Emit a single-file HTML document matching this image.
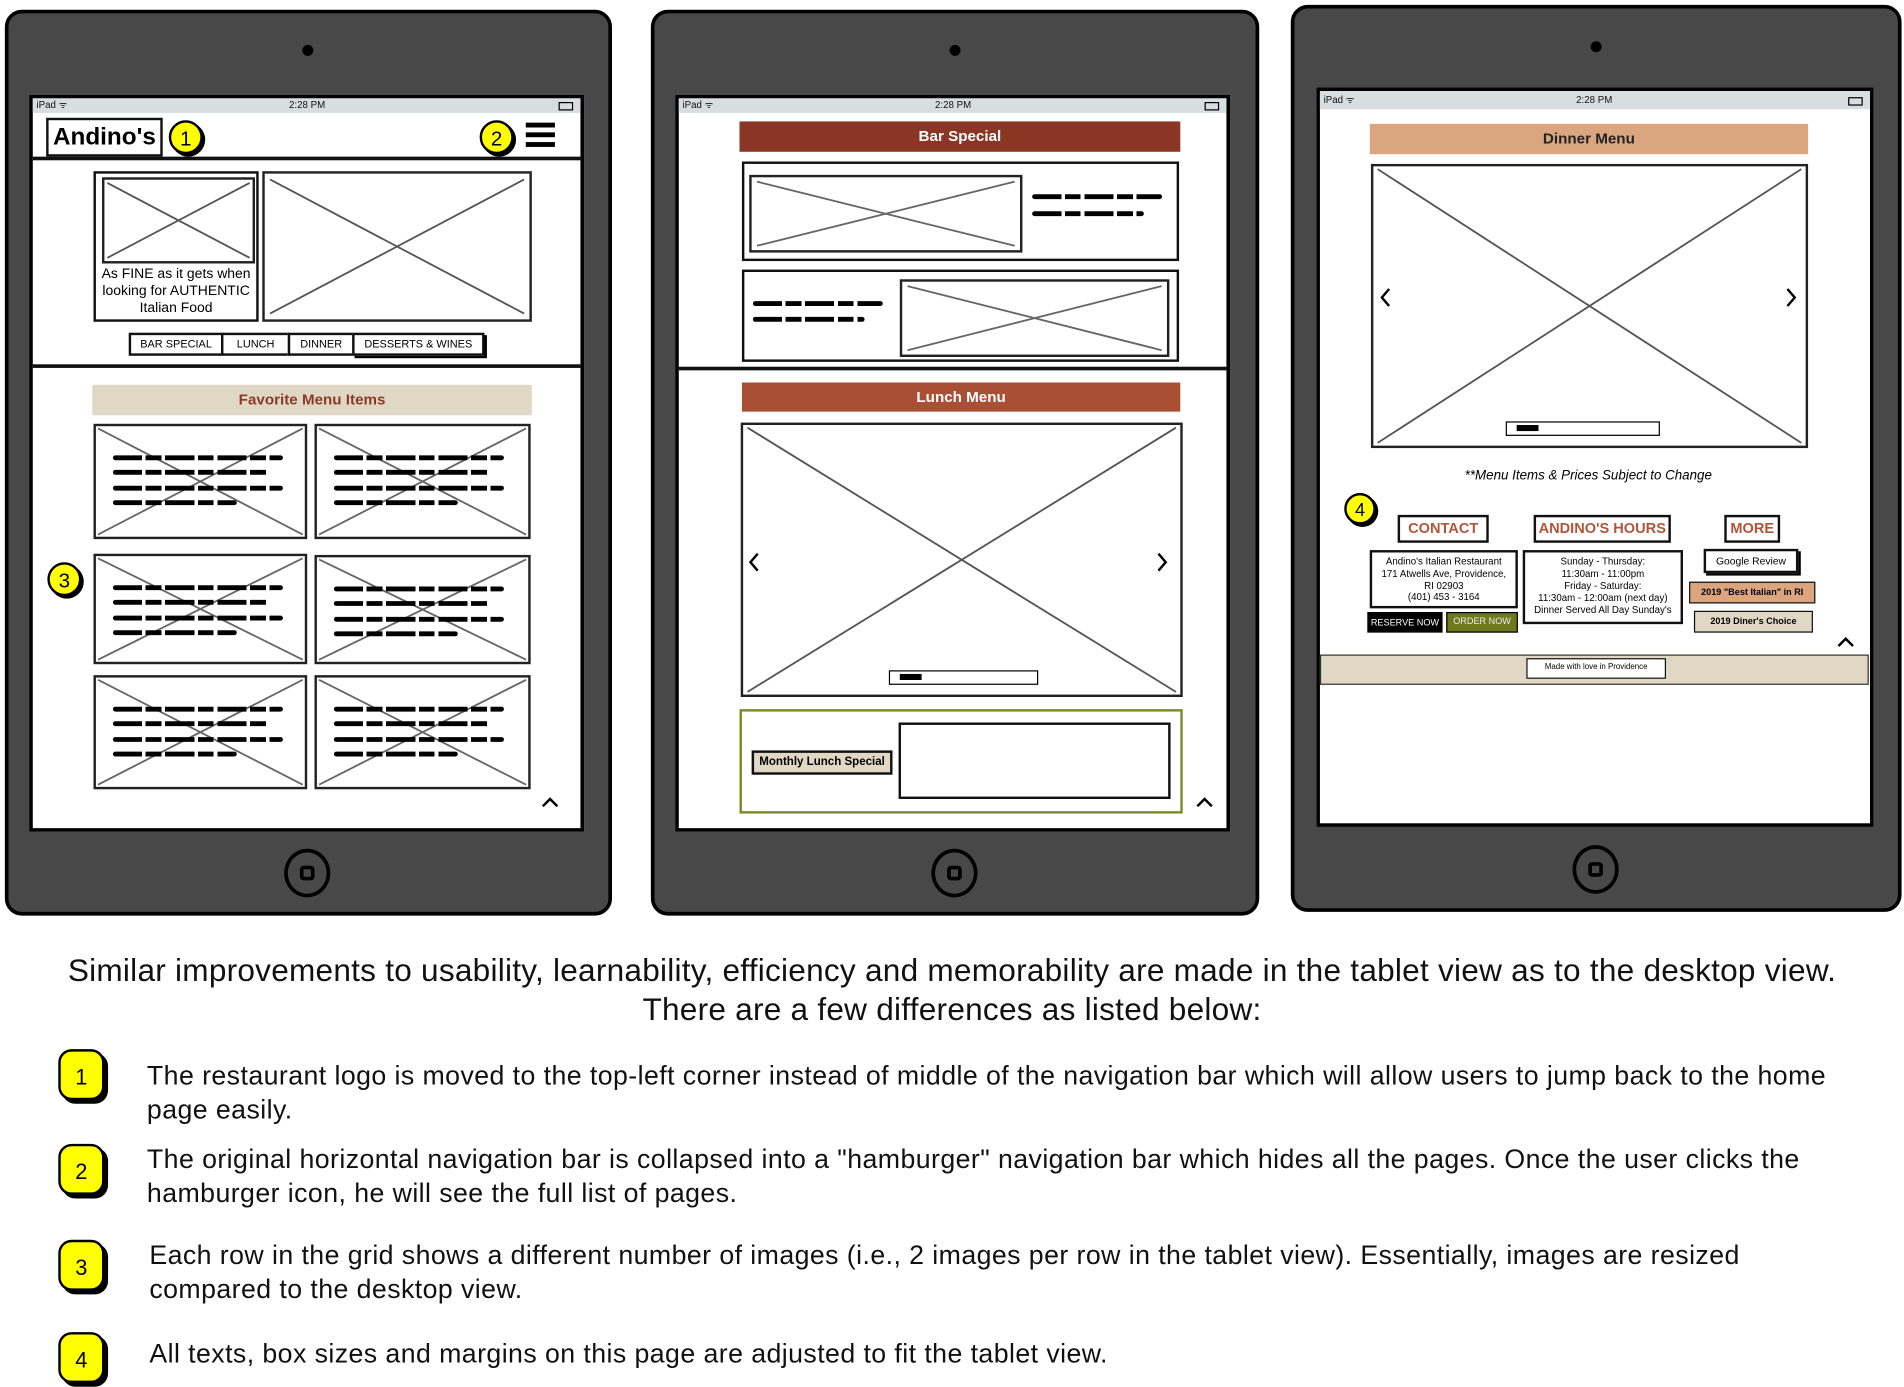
<!DOCTYPE html>
<html><head><meta charset="utf-8"><style>
html,body{margin:0;padding:0;background:#fff;}
body{width:1904px;height:1387px;overflow:hidden;position:relative;font-family:"Liberation Sans",sans-serif;}
#w{position:absolute;left:0;top:0;width:1568px;height:1142px;transform:scale(1.21429);transform-origin:0 0;}
.a{position:absolute;box-sizing:border-box;}
.tab{background:#484848;border:3px solid #000;border-radius:14px;}
.scr{background:#fff;border:3px solid #000;}
.cam{width:9px;height:9px;border-radius:50%;background:#000;}
.home{width:38px;height:40px;border-radius:50%;border:3px solid #000;}
.home:after{content:"";position:absolute;left:10px;top:11px;width:12px;height:12px;border:3px solid #000;border-radius:3px;box-sizing:border-box;}
.sb{background:#d8dde0;font-size:8px;line-height:12px;color:#111;}
.img{border:2px solid #222;background:#fff;}
.img svg{position:absolute;left:0;top:0;width:100%;height:100%;}
.s{position:absolute;height:4px;border-radius:2px;background:repeating-linear-gradient(90deg,#000 0 24px,transparent 24px 27px,#000 27px 40px,transparent 40px 43px);}
.bx{border:2px solid #111;background:#fff;}
.badge{width:28px;height:28px;border-radius:50%;background:#ffff00;border:2px solid #000;box-shadow:2px 2px 0 #000;font-size:17px;text-align:center;line-height:28px;}
.nb{border:2px solid #111;font-size:9px;text-align:center;line-height:15px;background:#fff;}
.lb{width:38px;height:42px;border-radius:11px;background:#ffff00;border:2px solid #000;box-shadow:3px 3px 0 #000;font-size:18px;text-align:center;line-height:42px;}
.t{font-size:22px;line-height:28px;color:#111;letter-spacing:0.35px;}
</style></head><body><div id="w">

<!-- TABLET 1 -->
<div class="a tab" style="left:4px;top:8px;width:500px;height:746px"></div>
<div class="a cam" style="left:249px;top:37px"></div>
<div class="a home" style="left:234px;top:699px"></div>
<div class="a scr" style="left:24px;top:78px;width:457px;height:607px"></div>
<div class="a sb" style="left:27px;top:81px;width:451px;height:12px"><span style="position:absolute;left:3px">iPad ᯤ</span><span style="position:absolute;left:211px">2:28 PM</span><span style="position:absolute;right:6px;top:3px;width:10px;height:5px;border:1px solid #000"></span></div>
<div class="a" style="left:27px;top:129px;width:451px;height:3px;background:#111"></div>
<div class="a" style="left:38px;top:97px;width:96px;height:32px;border:2px solid #111;font-size:20px;font-weight:bold;line-height:28px;text-align:center">Andino's</div>
<div class="a badge" style="left:139px;top:99px">1</div>
<div class="a badge" style="left:395px;top:99px">2</div>
<div class="a" style="left:433px;top:101px;width:24px;height:4px;background:#000"></div>
<div class="a" style="left:433px;top:109px;width:24px;height:4px;background:#000"></div>
<div class="a" style="left:433px;top:117px;width:24px;height:4px;background:#000"></div>
<div class="a bx" style="left:77px;top:141px;width:136px;height:124px"></div>
<div class="a img" style="left:84px;top:146px;width:126px;height:71px"><svg viewBox="0 0 100 100" preserveAspectRatio="none"><path d="M2 4L98 96M2 96L98 4" stroke="#555" stroke-width="1.5" vector-effect="non-scaling-stroke"/></svg></div>
<div class="a" style="left:78px;top:219px;width:134px;font-size:11.5px;line-height:14px;text-align:center">As FINE as it gets when looking for AUTHENTIC Italian Food</div>
<div class="a img" style="left:216px;top:141px;width:222px;height:124px"><svg viewBox="0 0 100 100" preserveAspectRatio="none"><path d="M2 4L98 96M2 96L98 4" stroke="#555" stroke-width="1.5" vector-effect="non-scaling-stroke"/></svg></div>
<div class="a nb" style="left:106px;top:274px;width:78px;height:19px">BAR SPECIAL</div>
<div class="a nb" style="left:182px;top:274px;width:57px;height:19px">LUNCH</div>
<div class="a nb" style="left:237px;top:274px;width:55px;height:19px">DINNER</div>
<div class="a nb" style="left:290px;top:274px;width:109px;height:19px;box-shadow:2px 2px 0 #000">DESSERTS &amp; WINES</div>
<div class="a" style="left:27px;top:300px;width:451px;height:3px;background:#111"></div>
<div class="a" style="left:76px;top:317px;width:362px;height:25px;background:#e0d8c4;color:#8b3a2a;font-weight:bold;font-size:12.5px;text-align:center;line-height:25px">Favorite Menu Items</div>

<div class="a img" style="left:77px;top:349px;width:176px;height:95px"><svg viewBox="0 0 100 100" preserveAspectRatio="none"><path d="M1 2L99 98M1 98L99 2" stroke="#666" stroke-width="1.5" vector-effect="non-scaling-stroke"/></svg><i class="s" style="left:14px;top:24px;width:140px"></i><i class="s" style="left:14px;top:36px;width:128px"></i><i class="s" style="left:14px;top:49px;width:140px"></i><i class="s" style="left:14px;top:61px;width:102px"></i></div>
<div class="a img" style="left:259px;top:349px;width:178px;height:95px"><svg viewBox="0 0 100 100" preserveAspectRatio="none"><path d="M1 2L99 98M1 98L99 2" stroke="#666" stroke-width="1.5" vector-effect="non-scaling-stroke"/></svg><i class="s" style="left:14px;top:24px;width:140px"></i><i class="s" style="left:14px;top:36px;width:128px"></i><i class="s" style="left:14px;top:49px;width:140px"></i><i class="s" style="left:14px;top:61px;width:102px"></i></div>
<div class="a img" style="left:77px;top:456px;width:176px;height:91px"><svg viewBox="0 0 100 100" preserveAspectRatio="none"><path d="M1 2L99 98M1 98L99 2" stroke="#666" stroke-width="1.5" vector-effect="non-scaling-stroke"/></svg><i class="s" style="left:14px;top:24px;width:140px"></i><i class="s" style="left:14px;top:36px;width:128px"></i><i class="s" style="left:14px;top:49px;width:140px"></i><i class="s" style="left:14px;top:61px;width:102px"></i></div>
<div class="a img" style="left:259px;top:457px;width:178px;height:90px"><svg viewBox="0 0 100 100" preserveAspectRatio="none"><path d="M1 2L99 98M1 98L99 2" stroke="#666" stroke-width="1.5" vector-effect="non-scaling-stroke"/></svg><i class="s" style="left:14px;top:24px;width:140px"></i><i class="s" style="left:14px;top:36px;width:128px"></i><i class="s" style="left:14px;top:49px;width:140px"></i><i class="s" style="left:14px;top:61px;width:102px"></i></div>
<div class="a img" style="left:77px;top:556px;width:176px;height:94px"><svg viewBox="0 0 100 100" preserveAspectRatio="none"><path d="M1 2L99 98M1 98L99 2" stroke="#666" stroke-width="1.5" vector-effect="non-scaling-stroke"/></svg><i class="s" style="left:14px;top:24px;width:140px"></i><i class="s" style="left:14px;top:36px;width:128px"></i><i class="s" style="left:14px;top:49px;width:140px"></i><i class="s" style="left:14px;top:61px;width:102px"></i></div>
<div class="a img" style="left:259px;top:556px;width:178px;height:94px"><svg viewBox="0 0 100 100" preserveAspectRatio="none"><path d="M1 2L99 98M1 98L99 2" stroke="#666" stroke-width="1.5" vector-effect="non-scaling-stroke"/></svg><i class="s" style="left:14px;top:24px;width:140px"></i><i class="s" style="left:14px;top:36px;width:128px"></i><i class="s" style="left:14px;top:49px;width:140px"></i><i class="s" style="left:14px;top:61px;width:102px"></i></div>
<div class="a badge" style="left:39px;top:463px">3</div>
<svg class="a" style="left:446px;top:656px" width="14" height="10"><path d="M1 8L7 2L13 8" stroke="#000" stroke-width="2" fill="none"/></svg>

<!-- TABLET 2 -->
<div class="a tab" style="left:536px;top:8px;width:501px;height:746px"></div>
<div class="a cam" style="left:782px;top:37px"></div>
<div class="a home" style="left:767px;top:699px"></div>
<div class="a scr" style="left:556px;top:78px;width:457px;height:607px"></div>
<div class="a sb" style="left:559px;top:81px;width:451px;height:12px"><span style="position:absolute;left:3px">iPad ᯤ</span><span style="position:absolute;left:211px">2:28 PM</span><span style="position:absolute;right:6px;top:3px;width:10px;height:5px;border:1px solid #000"></span></div>
<div class="a" style="left:609px;top:100px;width:363px;height:25px;background:#8b3524;color:#fff;font-weight:bold;font-size:12.5px;text-align:center;line-height:25px">Bar Special</div>
<div class="a bx" style="left:611px;top:133px;width:360px;height:82px"></div>
<div class="a img" style="left:617px;top:144px;width:225px;height:64px"><svg viewBox="0 0 100 100" preserveAspectRatio="none"><path d="M2 6L98 94M2 94L98 6" stroke="#666" stroke-width="1.5" vector-effect="non-scaling-stroke"/></svg></div>
<i class="s" style="left:850px;top:160px;width:107px"></i><i class="s" style="left:850px;top:174px;width:92px"></i>
<div class="a bx" style="left:611px;top:222px;width:360px;height:76px"></div>
<i class="s" style="left:620px;top:248px;width:107px"></i><i class="s" style="left:620px;top:261px;width:92px"></i>
<div class="a img" style="left:741px;top:230px;width:222px;height:64px"><svg viewBox="0 0 100 100" preserveAspectRatio="none"><path d="M2 6L98 94M2 94L98 6" stroke="#666" stroke-width="1.5" vector-effect="non-scaling-stroke"/></svg></div>
<div class="a" style="left:559px;top:302px;width:451px;height:3px;background:#111"></div>
<div class="a" style="left:611px;top:315px;width:361px;height:24px;background:#a84f35;color:#fff;font-weight:bold;font-size:12.5px;text-align:center;line-height:24px">Lunch Menu</div>
<div class="a img" style="left:610px;top:348px;width:364px;height:226px"><svg viewBox="0 0 100 100" preserveAspectRatio="none"><path d="M1 1L99 99M1 99L99 1" stroke="#555" stroke-width="1.5" vector-effect="non-scaling-stroke"/></svg></div>
<svg class="a" style="left:616px;top:455px" width="10" height="16"><path d="M8 1L2 8L8 15" stroke="#000" stroke-width="2" fill="none"/></svg>
<svg class="a" style="left:952px;top:455px" width="10" height="16"><path d="M2 1L8 8L2 15" stroke="#000" stroke-width="2" fill="none"/></svg>
<div class="a" style="left:732px;top:552px;width:123px;height:12px;border:1.5px solid #000;background:#fff"><div class="a" style="left:8px;top:2px;width:18px;height:5px;background:#000"></div></div>
<div class="a" style="left:609px;top:584px;width:365px;height:86px;border:2px solid #7a8a2a"></div>
<div class="a" style="left:619px;top:618px;width:116px;height:20px;background:#e0d8c4;border:2px solid #111;font-size:9.5px;font-weight:bold;text-align:center;line-height:16px">Monthly Lunch Special</div>
<div class="a bx" style="left:740px;top:595px;width:224px;height:63px"></div>
<svg class="a" style="left:985px;top:656px" width="14" height="10"><path d="M1 8L7 2L13 8" stroke="#000" stroke-width="2" fill="none"/></svg>

<!-- TABLET 3 -->
<div class="a tab" style="left:1063px;top:4px;width:503px;height:747px"></div>
<div class="a cam" style="left:1310px;top:34px"></div>
<div class="a home" style="left:1295px;top:696px"></div>
<div class="a scr" style="left:1084px;top:72px;width:459px;height:609px"></div>
<div class="a sb" style="left:1087px;top:75px;width:453px;height:15px;line-height:15px"><span style="position:absolute;left:3px">iPad ᯤ</span><span style="position:absolute;left:211px">2:28 PM</span><span style="position:absolute;right:6px;top:5px;width:10px;height:5px;border:1px solid #000"></span></div>
<div class="a" style="left:1128px;top:102px;width:361px;height:25px;background:#dba67f;color:#222;font-weight:bold;font-size:12.5px;text-align:center;line-height:25px">Dinner Menu</div>
<div class="a img" style="left:1129px;top:135px;width:360px;height:234px"><svg viewBox="0 0 100 100" preserveAspectRatio="none"><path d="M1 1L99 99M1 99L99 1" stroke="#555" stroke-width="1.5" vector-effect="non-scaling-stroke"/></svg></div>
<svg class="a" style="left:1136px;top:237px" width="10" height="16"><path d="M8 1L2 8L8 15" stroke="#000" stroke-width="2" fill="none"/></svg>
<svg class="a" style="left:1470px;top:237px" width="10" height="16"><path d="M2 1L8 8L2 15" stroke="#000" stroke-width="2" fill="none"/></svg>
<div class="a" style="left:1240px;top:347px;width:127px;height:12px;border:1.5px solid #000;background:#fff"><div class="a" style="left:8px;top:2px;width:18px;height:5px;background:#000"></div></div>
<div class="a" style="left:1128px;top:384px;width:360px;font-size:11px;font-style:italic;text-align:center;line-height:16px">**Menu Items &amp; Prices Subject to Change</div>
<div class="a badge" style="left:1107px;top:406px;width:26px;height:26px;line-height:26px;font-size:15px">4</div>
<div class="a" style="left:1151px;top:424px;width:75px;height:23px;border:2px solid #111;color:#b0553a;font-size:12px;font-weight:bold;text-align:center;line-height:19px">CONTACT</div>
<div class="a" style="left:1263px;top:424px;width:113px;height:23px;border:2px solid #111;color:#b0553a;font-size:12px;font-weight:bold;text-align:center;line-height:19px">ANDINO'S HOURS</div>
<div class="a" style="left:1420px;top:424px;width:46px;height:23px;border:2px solid #111;color:#b0553a;font-size:12px;font-weight:bold;text-align:center;line-height:19px">MORE</div>
<div class="a bx" style="left:1128px;top:453px;width:122px;height:48px;font-size:8px;line-height:9.8px;text-align:center;padding-top:3px">Andino's Italian Restaurant<br>171 Atwells Ave, Providence,<br>RI 02903<br>(401) 453 - 3164</div>
<div class="a" style="left:1126px;top:504px;width:62px;height:17px;background:#000;color:#fff;font-size:7.5px;text-align:center;line-height:17px">RESERVE NOW</div>
<div class="a" style="left:1191px;top:504px;width:59px;height:17px;background:#6f7a1e;border:1.5px solid #000;color:#eee;font-size:7.5px;text-align:center;line-height:14px">ORDER NOW</div>
<div class="a bx" style="left:1254px;top:453px;width:132px;height:61px;font-size:8px;line-height:10px;text-align:center;padding-top:3px">Sunday - Thursday:<br>11:30am - 11:00pm<br>Friday - Saturday:<br>11:30am - 12:00am (next day)<br>Dinner Served All Day Sunday's</div>
<div class="a bx" style="left:1403px;top:452px;width:78px;height:20px;box-shadow:2px 2px 0 #000;font-size:8.5px;text-align:center;line-height:16px">Google Review</div>
<div class="a" style="left:1391px;top:479px;width:104px;height:18px;background:#dba67f;border:1.5px solid #111;font-size:7.5px;font-weight:bold;text-align:center;line-height:15px">2019 "Best Italian" in RI</div>
<div class="a" style="left:1395px;top:503px;width:98px;height:18px;background:#e0d8c4;border:1.5px solid #111;font-size:7.5px;font-weight:bold;text-align:center;line-height:15px">2019 Diner's Choice</div>
<svg class="a" style="left:1513px;top:524px" width="14" height="10"><path d="M1 8L7 2L13 8" stroke="#000" stroke-width="2" fill="none"/></svg>
<div class="a" style="left:1087px;top:539px;width:452px;height:25px;background:#e0d8c4;border:1.5px solid #333"></div>
<div class="a" style="left:1257px;top:542px;width:115px;height:17px;background:#fff;border:1.5px solid #111;font-size:6.5px;text-align:center;line-height:14px">Made with love in Providence</div>

<!-- Bottom text -->
<div class="a" style="left:0;top:783px;width:1568px;text-align:center;font-size:26px;line-height:32px;color:#111;letter-spacing:0.2px">Similar improvements to usability, learnability, efficiency and memorability are made in the tablet view as to the desktop view.<br>There are a few differences as listed below:</div>
<div class="a lb" style="left:48px;top:864px">1</div>
<div class="a t" style="left:121px;top:872px;width:1400px">The restaurant logo is moved to the top-left corner instead of middle of the navigation bar which will allow users to jump back to the home page easily.</div>
<div class="a lb" style="left:48px;top:942px">2</div>
<div class="a t" style="left:121px;top:941px;width:1420px">The original horizontal navigation bar is collapsed into a "hamburger" navigation bar which hides all the pages. Once the user clicks the hamburger icon, he will see the full list of pages.</div>
<div class="a lb" style="left:48px;top:1021px">3</div>
<div class="a t" style="left:123px;top:1020px;width:1360px">Each row in the grid shows a different number of images (i.e., 2 images per row in the tablet view). Essentially, images are resized compared to the desktop view.</div>
<div class="a lb" style="left:48px;top:1097px">4</div>
<div class="a t" style="left:123px;top:1101px;width:1420px">All texts, box sizes and margins on this page are adjusted to fit the tablet view.</div>
</div></body></html>
